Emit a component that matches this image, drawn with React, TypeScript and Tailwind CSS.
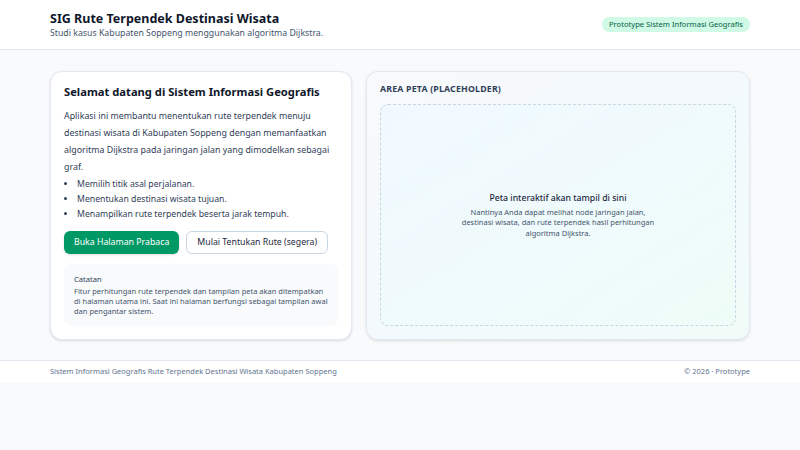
export default function App() {
  return (
    <div className="min-h-[450px] bg-slate-50 font-['Noto_Sans',sans-serif] text-slate-900">
      {/* Header */}
      <header className="border-b border-slate-200 bg-white">
        <div className="flex h-[49px] items-center justify-between px-[50px]">
          <div className="flex flex-col">
            <h1 className="text-[12.5px] font-bold leading-[17px] text-slate-900">
              SIG Rute Terpendek Destinasi Wisata
            </h1>
            <p className="text-[8.75px] leading-[13px] text-slate-600">
              Studi kasus Kabupaten Soppeng menggunakan algoritma Dijkstra.
            </p>
          </div>
          <span className="rounded-full bg-emerald-100 px-[7px] py-[2px] text-[7.6px] leading-[11px] text-emerald-800">
            Prototype Sistem Informasi Geografis
          </span>
        </div>
      </header>

      {/* Main */}
      <main className="flex gap-[14px] px-[50px] pt-[21px] pb-[20px]">
        <section className="flex w-[302px] flex-col rounded-xl border border-slate-200 bg-white px-[13px] pt-[11px] pb-[13px] shadow-sm">
          <h2 className="text-[11.2px] font-bold leading-[18px] text-slate-900">
            Selamat datang di Sistem Informasi Geografis
          </h2>
          <p className="mt-[7px] text-[8.85px] leading-[17px] text-slate-700">
            Aplikasi ini membantu menentukan rute terpendek menuju destinasi wisata di Kabupaten Soppeng dengan memanfaatkan
            algoritma Dijkstra pada jaringan jalan yang dimodelkan sebagai graf.
          </p>
          <ul className="mt-[1px] list-disc pl-[13px] text-[8.7px] leading-[15px] text-slate-700">
            <li>Memilih titik asal perjalanan.</li>
            <li>Menentukan destinasi wisata tujuan.</li>
            <li>Menampilkan rute terpendek beserta jarak tempuh.</li>
          </ul>
          <div className="mt-[9px] flex gap-[7px]">
            <button className="h-[23px] rounded-md bg-emerald-600 px-[10px] text-[8.75px] text-white shadow-sm">
              Buka Halaman Prabaca
            </button>
            <button className="h-[23px] rounded-md border border-slate-300 bg-white px-[10px] text-[8.75px] text-slate-800">
              Mulai Tentukan Rute (segera)
            </button>
          </div>
          <div className="mt-[10px] rounded-lg bg-slate-50 px-[10px] pt-[9px] pb-[10px]">
            <p className="text-[7.6px] leading-[12px] text-slate-700">Catatan</p>
            <p className="mt-[1px] text-[7.5px] leading-[10px] text-slate-600">
              Fitur perhitungan rute terpendek dan tampilan peta akan ditempatkan di halaman utama ini. Saat ini halaman
              berfungsi sebagai tampilan awal dan pengantar sistem.
            </p>
          </div>
        </section>

        <section className="flex flex-1 flex-col rounded-xl border border-slate-200 bg-gradient-to-br from-slate-50 via-sky-50/60 to-emerald-50/60 px-[13px] pt-[10px] pb-[13px] shadow-sm">
          <h2 className="text-[8.8px] font-bold uppercase leading-[14px] tracking-[0.02em] text-slate-700">
            Area Peta (Placeholder)
          </h2>
          <div className="mt-[8px] flex flex-1 flex-col items-center justify-center rounded-lg border border-dashed border-slate-300 bg-gradient-to-br from-sky-50 to-emerald-50/50 px-4 text-center">
            <p className="text-[8.7px] font-medium leading-[13px] text-slate-800">Peta interaktif akan tampil di sini</p>
            <p className="mt-[2px] max-w-[200px] text-[7.5px] leading-[10.5px] text-slate-600">
              Nantinya Anda dapat melihat node jaringan jalan, destinasi wisata, dan rute terpendek hasil perhitungan
              algoritma Dijkstra.
            </p>
          </div>
        </section>
      </main>

      {/* Footer */}
      <footer className="border-t border-slate-200 bg-white">
        <div className="flex h-[22px] items-center justify-between px-[50px] text-[7.5px] text-slate-500">
          <span>Sistem Informasi Geografis Rute Terpendek Destinasi Wisata Kabupaten Soppeng</span>
          <span>© 2026 · Prototype</span>
        </div>
      </footer>
    </div>
  );
}
